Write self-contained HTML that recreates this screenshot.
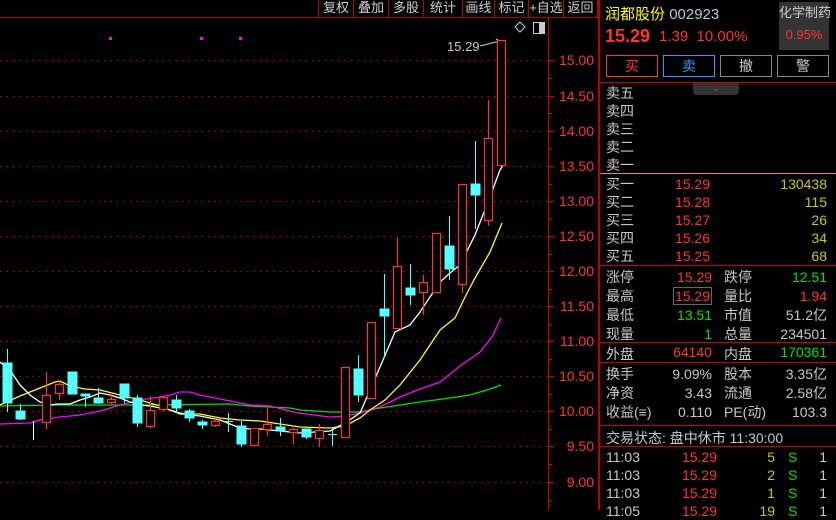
<!DOCTYPE html>
<html><head><meta charset="utf-8"><style>
*{margin:0;padding:0;box-sizing:border-box}
body{width:836px;height:510px;background:#000;overflow:hidden;position:relative;font-family:"Liberation Sans","Noto Sans CJK SC",sans-serif;font-size:14px;color:#c8c8c8}
.a{position:absolute;white-space:nowrap}
.r{color:#ff3232}.g{color:#00e000}.y{color:#e0e000}.w{color:#c8c8c8}.o{color:#c8c800}
.tb{position:absolute;top:0;height:17px;font-size:13px;line-height:15px;color:#d0d0d0;text-align:center;border-left:1px solid #b00}
.hl{position:absolute;left:600px;width:236px;height:1px;background:#c00}
.lab{position:absolute;left:606px}
.rv{position:absolute;text-align:right}
</style></head><body>
<svg class="a" style="left:0;top:0" width="600" height="510">
<line x1="0" y1="17.5" x2="600" y2="17.5" stroke="#a00" stroke-width="1"/>
<g stroke="#c00" stroke-width="1" stroke-dasharray="1.5,5">
<line x1="0" y1="60.5" x2="548" y2="60.5"/><line x1="0" y1="96.5" x2="548" y2="96.5"/><line x1="0" y1="131.5" x2="548" y2="131.5"/><line x1="0" y1="166.5" x2="548" y2="166.5"/><line x1="0" y1="201.5" x2="548" y2="201.5"/><line x1="0" y1="236.5" x2="548" y2="236.5"/><line x1="0" y1="271.5" x2="548" y2="271.5"/><line x1="0" y1="306.5" x2="548" y2="306.5"/><line x1="0" y1="341.5" x2="548" y2="341.5"/><line x1="0" y1="376.5" x2="548" y2="376.5"/><line x1="0" y1="411.5" x2="548" y2="411.5"/><line x1="0" y1="446.5" x2="548" y2="446.5"/><line x1="0" y1="482.5" x2="548" y2="482.5"/>
</g>
<line x1="548.5" y1="17" x2="548.5" y2="510" stroke="#c00"/>
<g stroke="#c00">
<path d="M548 60.5h6M548 96.5h6M548 131.5h6M548 166.5h6M548 201.5h6M548 236.5h6M548 271.5h6M548 306.5h6M548 341.5h6M548 376.5h6M548 411.5h6M548 446.5h6M548 482.5h6M548 78.5h4M548 113.5h4M548 148.5h4M548 184.5h4M548 219.5h4M548 254.5h4M548 289.5h4M548 324.5h4M548 359.5h4M548 394.5h4M548 429.5h4M548 464.5h4M548 500.5h4"/>
</g>
<g fill="#ff3232" font-size="14" text-anchor="end" font-family="Liberation Sans">
<text x="594" y="65">15.00</text><text x="594" y="101">14.50</text><text x="594" y="136">14.00</text><text x="594" y="171">13.50</text><text x="594" y="206">13.00</text><text x="594" y="241">12.50</text><text x="594" y="276">12.00</text><text x="594" y="311">11.50</text><text x="594" y="346">11.00</text><text x="594" y="381">10.50</text><text x="594" y="416">10.00</text><text x="594" y="451">9.50</text><text x="594" y="487">9.00</text>
</g>
<g fill="#f0f">
<rect x="109" y="37" width="3" height="3"/><rect x="200" y="37" width="3" height="3"/><rect x="239" y="37" width="3" height="3"/>
</g>
<path d="M520 22l5 5-5 5-5-5z" fill="none" stroke="#ccc"/>
<rect x="533.5" y="22.5" width="11" height="11" fill="none" stroke="#ccc"/><rect x="539" y="23" width="5" height="10" fill="#ccc"/>
<text x="447" y="51" fill="#c8c8c8" font-size="13">15.29</text>
<path d="M480 46l20-5M496 39l4 2-3 3" stroke="#ccc" fill="none"/>
<!-- MA lines -->
<polyline fill="none" stroke="#00e000" stroke-width="1.3" points="0,406 60,405 150,405 230,404 250,406 270,407 290,408 300,410 330,412 360,412 380,408 400,405 420,402 450,398 470,395 490,389 501,385"/>
<polyline fill="none" stroke="#f0f" stroke-width="1.3" points="0,424 30,423 40,420 60,417 80,415 100,411 110,408 120,405 140,400 160,397 170,395 180,392 190,392 200,395 215,398 230,401 250,405 270,406 298,413 330,417 345,416 360,413 380,407 400,397 420,389 440,382 460,366 480,352 492,337 501,318"/>
<polyline fill="none" stroke="#ff0" stroke-width="1.3" points="0,405 20,396 40,388 55,382 60,381 70,386 85,389 100,390 120,395 140,400 160,406 180,414 200,414 220,418 240,420 260,421 280,424 300,427 330,428 345,426 360,418 370,410 385,400 400,385 420,360 440,330 455,318 465,297 475,278 490,252 502,223"/>
<polyline fill="none" stroke="#fff" stroke-width="1.3" points="0,362 10,370 20,385 30,395 40,402 50,405 57,404 70,404 80,400 90,397 100,393 110,395 120,398 130,402 140,405 150,406 160,408 170,410 180,413 190,415 200,416 210,418 220,420 230,424 240,428 250,429 260,429 270,430 280,431 290,432 300,433 330,431 345,423 360,413 380,367 395,332 410,325 420,312 440,282 450,273 460,265 475,235 490,197 500,170 503,165"/>
<!-- candles cyan -->
<g fill="#54ffff" stroke="#54ffff">
<line x1="7.5" y1="349" x2="7.5" y2="412"/><rect x="3" y="363" width="9" height="40"/>
<line x1="20.5" y1="404" x2="20.5" y2="420"/><rect x="16" y="411" width="9" height="8"/>
<rect x="68" y="372" width="9" height="22"/>
<line x1="85.5" y1="394" x2="85.5" y2="407"/><rect x="81" y="394" width="9" height="2"/>
<line x1="98.5" y1="388" x2="98.5" y2="404"/><rect x="94" y="398" width="9" height="5"/>
<line x1="124.5" y1="384" x2="124.5" y2="403"/><rect x="120" y="384" width="9" height="14"/>
<line x1="137.5" y1="395" x2="137.5" y2="427"/><rect x="133" y="398" width="9" height="25"/>
<line x1="176.5" y1="395" x2="176.5" y2="413"/><rect x="172" y="400" width="9" height="8"/>
<line x1="189.5" y1="409" x2="189.5" y2="422"/><rect x="185" y="411" width="9" height="7"/>
<line x1="202.5" y1="420" x2="202.5" y2="429"/><rect x="198" y="422" width="9" height="3"/>
<line x1="228.5" y1="413" x2="228.5" y2="432"/><line x1="224" y1="421.5" x2="233" y2="421.5"/>
<line x1="241.5" y1="421" x2="241.5" y2="447"/><rect x="237" y="426" width="9" height="18"/>
<line x1="280.5" y1="418" x2="280.5" y2="436"/><rect x="276" y="427" width="9" height="4"/>
<line x1="306.5" y1="429" x2="306.5" y2="439"/><rect x="302" y="429" width="9" height="8"/>
<line x1="332.5" y1="427" x2="332.5" y2="446"/><line x1="328" y1="434.5" x2="337" y2="434.5"/>
<line x1="358.5" y1="355" x2="358.5" y2="402"/><rect x="354" y="369" width="9" height="26"/>
<line x1="384.5" y1="274" x2="384.5" y2="357"/><rect x="380" y="309" width="9" height="7"/>
<line x1="410.5" y1="264" x2="410.5" y2="305"/><rect x="406" y="288" width="9" height="7"/>
<line x1="449.5" y1="216" x2="449.5" y2="280"/><rect x="445" y="246" width="9" height="23"/>
<line x1="475.5" y1="141" x2="475.5" y2="229"/><rect x="471" y="184" width="9" height="11"/>
</g>
<line x1="33.5" y1="421" x2="33.5" y2="440" stroke="#fff"/>
<!-- candles red -->
<g fill="#000" stroke="#ff3232" stroke-width="1.2">
<line x1="46.5" y1="372" x2="46.5" y2="429"/><rect x="42.5" y="395.5" width="8" height="27"/>
<line x1="59.5" y1="380" x2="59.5" y2="400"/><rect x="55.5" y="384.5" width="8" height="9"/>
<line x1="111.5" y1="393" x2="111.5" y2="404"/><rect x="107.5" y="399.5" width="8" height="3"/>
<line x1="150.5" y1="396" x2="150.5" y2="428"/><rect x="146.5" y="410.5" width="8" height="16"/>
<line x1="163.5" y1="396" x2="163.5" y2="411"/><rect x="159.5" y="397.5" width="8" height="12"/>
<line x1="215.5" y1="418" x2="215.5" y2="427"/><rect x="211.5" y="421.5" width="8" height="4"/>
<rect x="250.5" y="428.5" width="8" height="17"/>
<line x1="267.5" y1="408" x2="267.5" y2="436"/><rect x="263.5" y="424.5" width="8" height="5"/>
<line x1="293.5" y1="428" x2="293.5" y2="444"/><rect x="289.5" y="429.5" width="8" height="3"/>
<line x1="319.5" y1="424" x2="319.5" y2="447"/><rect x="315.5" y="430.5" width="8" height="8"/>
<rect x="341.5" y="367.5" width="8" height="70"/>
<rect x="367.5" y="322.5" width="8" height="76"/>
<line x1="397.5" y1="238" x2="397.5" y2="329"/><rect x="393.5" y="266.5" width="8" height="62"/>
<line x1="423.5" y1="275" x2="423.5" y2="315"/><rect x="419.5" y="282.5" width="8" height="10"/>
<rect x="432.5" y="233.5" width="8" height="59"/>
<line x1="462.5" y1="184" x2="462.5" y2="293"/><rect x="458.5" y="184.5" width="8" height="100"/>
<line x1="488.5" y1="100" x2="488.5" y2="226"/><rect x="484.5" y="138.5" width="8" height="82"/>
<rect x="497.5" y="40.5" width="8" height="125"/>
</g>
</svg>
<div class="tb" style="left:318px;width:35px">复权</div>
<div class="tb" style="left:353px;width:35px">叠加</div>
<div class="tb" style="left:388px;width:35px">多股</div>
<div class="tb" style="left:423px;width:39px">统计</div>
<div class="tb" style="left:462px;width:32px">画线</div>
<div class="tb" style="left:494px;width:34px">标记</div>
<div class="tb" style="left:528px;width:35px">+自选</div>
<div class="tb" style="left:563px;width:35px;border-right:1px solid #b00">返回</div>
<div class="a" style="left:598px;top:0;width:2px;height:510px;background:#b00"></div>
<div class="a" style="left:605px;top:3px;font-size:15px"><span style="color:#ff0">润都股份</span> <span style="color:#b8c8d8">002923</span></div>
<div class="a" style="left:779px;top:2px;width:50px;height:48px;background:#333;text-align:center;font-size:13px;line-height:22px;color:#ccc">化学制药<br><span class="r">0.95%</span></div>
<div class="a r" style="left:605px;top:26px;font-size:18px;font-weight:bold">15.29</div>
<div class="a r" style="left:659px;top:28px;font-size:15px">1.39&nbsp; 10.00%</div>
<div class="a" style="left:606px;top:55px;width:52px;height:22px;border:1px solid #f33;color:#f33;text-align:center;line-height:20px">买</div>
<div class="a" style="left:663px;top:55px;width:52px;height:22px;border:1px solid #39f;color:#39f;text-align:center;line-height:20px">卖</div>
<div class="a" style="left:720px;top:55px;width:52px;height:22px;border:1px solid #888;color:#ccc;text-align:center;line-height:20px">撤</div>
<div class="a" style="left:777px;top:55px;width:52px;height:22px;border:1px solid #888;color:#ccc;text-align:center;line-height:20px">警</div>
<div class="hl" style="top:82px"></div>
<div class="a" style="left:693px;top:83px;width:46px;height:12px;background:#333;border-radius:0 0 4px 4px;color:#f33;font-size:9px;text-align:center;line-height:10px">⌄</div>
<div class="lab" style="top:84px;line-height:18px">卖五<br>卖四<br>卖三<br>卖二<br>卖一</div>
<div class="hl" style="top:173px;background:#e0a000"></div>
<div class="lab" style="top:175px;line-height:18px">买一<br>买二<br>买三<br>买四<br>买五</div>
<div class="rv r" style="left:650px;width:60px;top:175px;line-height:18px">15.29<br>15.28<br>15.27<br>15.26<br>15.25</div>
<div class="rv o" style="left:750px;width:77px;top:175px;line-height:18px">130438<br>115<br>26<br>34<br>68</div>
<div class="hl" style="top:265px"></div>
<div class="lab" style="top:268px;line-height:19px">涨停<br>最高<br>最低<br>现量</div>
<div class="rv" style="left:640px;width:72px;top:268px;line-height:19px"><span class="r">15.29</span><br><span class="r" style="border:1px solid #666;padding:0 1px">15.29</span><br><span class="g">13.51</span><br><span class="g">1</span></div>
<div class="a" style="left:724px;top:268px;line-height:19px">跌停<br>量比<br>市值<br>总量</div>
<div class="rv" style="left:750px;width:77px;top:268px;line-height:19px"><span class="g">12.51</span><br><span class="r">1.94</span><br>51.2亿<br>234501</div>
<div class="hl" style="top:342px"></div>
<div class="lab" style="top:344px">外盘</div>
<div class="rv r" style="left:640px;width:72px;top:344px">64140</div>
<div class="a" style="left:724px;top:344px">内盘</div>
<div class="rv g" style="left:750px;width:77px;top:344px">170361</div>
<div class="hl" style="top:362px"></div>
<div class="lab" style="top:365px;line-height:19px">换手<br>净资<br>收益(≡)</div>
<div class="rv" style="left:640px;width:72px;top:365px;line-height:19px">9.09%<br>3.43<br>0.110</div>
<div class="a" style="left:724px;top:365px;line-height:19px">股本<br>流通<br>PE(动)</div>
<div class="rv" style="left:750px;width:77px;top:365px;line-height:19px">3.35亿<br>2.58亿<br>103.3</div>
<div class="hl" style="top:425px"></div>
<div class="lab" style="top:428px">交易状态: 盘中休市 11:30:00</div>
<div class="hl" style="top:446px"></div>
<div class="lab" style="top:448px;line-height:18px">11:03<br>11:03<br>11:03<br>11:05</div>
<div class="rv r" style="left:650px;width:67px;top:448px;line-height:18px">15.29<br>15.29<br>15.29<br>15.29</div>
<div class="rv o" style="left:740px;width:35px;top:448px;line-height:18px">5<br>2<br>1<br>19</div>
<div class="a g" style="left:788px;top:448px;line-height:18px">S<br>S<br>S<br>S</div>
<div class="rv" style="left:800px;width:27px;top:448px;line-height:18px">1<br>1<br>1<br>1</div>
</body></html>
